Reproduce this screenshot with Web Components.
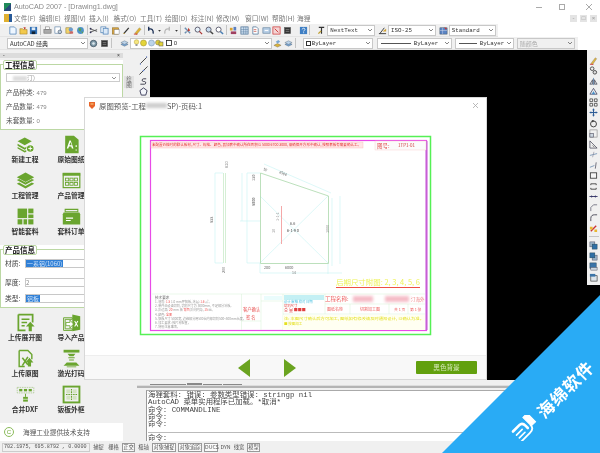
<!DOCTYPE html>
<html lang="zh">
<head>
<meta charset="utf-8">
<title>AutoCAD 2007</title>
<style>
  html, body { margin: 0; padding: 0; background: #fff; overflow: hidden; }
  body { font: 7px "Noto Sans CJK SC", "Liberation Sans", sans-serif; color: #333; }
</style>
</head>
<body>
<cad-window>
  <title-bar></title-bar>
  <menu-bar></menu-bar>
  <tool-row width="498">
    <tool-group icons="new open save"></tool-group><tool-sep></tool-sep>
    <tool-group icons="print preview publish earth"></tool-group><tool-sep></tool-sep>
    <tool-group icons="cut copy paste brush match"></tool-group><tool-sep></tool-sep>
    <tool-group icons="undo drop redo drop"></tool-group><tool-sep></tool-sep>
    <tool-group icons="pan zoom zoomin zoomout"></tool-group><tool-sep></tool-sep>
    <tool-group icons="props grid sheet calc markup dark"></tool-group>
    <tool-group icons="help" style="margin-left:4.500px"></tool-group><tool-sep></tool-sep>
    <tool-group icons="textstyle" style="margin-left:5px"></tool-group>
    <tool-combo w="48" font="mono">NextText</tool-combo>
    <tool-group icons="dimstyle" style="margin-left:2px"></tool-group>
    <tool-combo w="48" font="mono">ISO-25</tool-combo>
    <tool-group icons="tablestyle" style="margin-left:2px"></tool-group>
    <tool-combo w="47" font="mono">Standard</tool-combo>
  </tool-row>
  <tool-row width="578">
    <tool-combo w="81">AutoCAD 经典</tool-combo>
    <tool-group icons="gear dark" style="margin-left:.600px"></tool-group><tool-sep></tool-sep>
    <tool-group icons="layers" style="margin-left:5.600px"></tool-group>
    <tool-combo w="142"><layer-state></layer-state></tool-combo>
    <tool-group icons="layers2 layers" style="margin-left:.600px"></tool-group><tool-sep></tool-sep>
    <tool-combo w="70" font="mono" style="margin-left:6px"><span class="sw"></span>ByLayer</tool-combo>
    <tool-combo w="75" font="mono" line="30" style="margin-left:4px">ByLayer</tool-combo>
    <tool-combo w="59" font="mono" line="18" style="margin-left:3px">ByLayer</tool-combo>
    <tool-combo w="58" disabled style="margin-left:3px">随颜色</tool-combo>
  </tool-row>
  <work-area>
    <side-panel slot="side"></side-panel>
  </work-area>
  <status-bar></status-bar>
  <preview-dialog></preview-dialog>
  <watermark-ribbon></watermark-ribbon>
</cad-window>

<script>
// little 10x10 toolbar glyphs, rough copies of the acad ones
const GLYPHS = {
  new: '<path d="M2 1h5l2 2v6H2z" fill="#eef6ff" stroke="#4a7fb5" stroke-width=".8"/>',
  open: '<path d="M1 3h3l1 1h4v5H1z" fill="#f2c94c" stroke="#a07a20" stroke-width=".6"/><path d="M5 1l3 1-2 2z" fill="#c0392b"/>',
  save: '<rect x="1" y="1" width="8" height="8" fill="#2f6fb5"/><rect x="3" y="1.5" width="4" height="3" fill="#dfeaf5"/><rect x="3" y="6" width="4" height="3" fill="#123"/>',
  print: '<rect x="3" y="1" width="4" height="3" fill="#fff" stroke="#777" stroke-width=".6"/><rect x="1" y="4" width="8" height="4" fill="#aaa" stroke="#666" stroke-width=".6"/>',
  preview: '<rect x="1" y="1" width="6" height="7" fill="#fff" stroke="#5a7fa5" stroke-width=".7"/><circle cx="6.5" cy="6.5" r="2" fill="#bcd" stroke="#456" stroke-width=".7"/>',
  publish: '<rect x="1" y="2" width="6" height="6" fill="#f2d26a" stroke="#8a7a30" stroke-width=".6"/><circle cx="6.5" cy="4" r="2.4" fill="#6a9bd0"/><rect x="5" y="6" width="4" height="2.5" fill="#c66"/>',
  earth: '<circle cx="5" cy="5" r="3.8" fill="#4d93c9"/><path d="M3 2l3 1-1 3-2-1zM6 6l2 .5-1 2z" fill="#5ca04a"/>',
  cut: '<path d="M1 3l8 3M1 7l8-3" stroke="#555" stroke-width="1"/><circle cx="1.8" cy="3" r="1" fill="#335"/><circle cx="1.8" cy="7" r="1" fill="#335"/>',
  copy: '<rect x="1" y="1" width="5.5" height="6.5" fill="#fff" stroke="#4a7fb5" stroke-width=".8"/><rect x="3.5" y="2.5" width="5.5" height="6.5" fill="#dbe9f7" stroke="#4a7fb5" stroke-width=".8"/>',
  paste: '<rect x="1.5" y="2" width="7" height="7" fill="#d9a441" stroke="#8a6a20" stroke-width=".6"/><rect x="3.5" y="4" width="5.5" height="5" fill="#fff" stroke="#777" stroke-width=".5"/>',
  brush: '<path d="M2 8.5L7.5 2" stroke="#333" stroke-width="1.4"/><path d="M1.2 9l1.4-1.6 .8.8z" fill="#e0b030"/>',
  match: '<path d="M2 8l5-6 2 1.5-5 6z" fill="#e0b030" stroke="#996" stroke-width=".5"/><path d="M1 9h4" stroke="#c33" stroke-width="1"/>',
  undo: '<path d="M8 8.5C8.5 4 6 2.5 3 3.5M3 .8v4.6" fill="none" stroke="#1b2f55" stroke-width="1.5"/>',
  redo: '<path d="M2 8.5C1.5 4 4 2.5 7 3.5M7 .8v4.6" fill="none" stroke="#b9b9b9" stroke-width="1.5"/>',
  drop: '<path d="M3.5 4.5h3L5 6.5z" fill="#333"/>',
  pan: '<path d="M2 2l6 6M2 8l2-2" stroke="#6d8fb0" stroke-width="1.6"/><path d="M6 2l2 3-3 1z" fill="#c0392b"/>',
  zoom: '<circle cx="4" cy="4" r="2.8" fill="#e8f2fb" stroke="#556" stroke-width="1"/><path d="M6 6l3 3" stroke="#a33" stroke-width="1.4"/>',
  zoomin: '<circle cx="4" cy="4" r="2.8" fill="#c8dcf0" stroke="#556" stroke-width="1"/><path d="M6 6l3 3" stroke="#444" stroke-width="1.6"/>',
  zoomout: '<circle cx="4" cy="4" r="2.8" fill="#fff" stroke="#556" stroke-width="1"/><path d="M6 6l3 3" stroke="#4a7fb5" stroke-width="1.6"/>',
  props: '<path d="M1 2h3v3H1z" fill="#d8a030"/><path d="M5 1h3v4H5z" fill="#5a7fc0"/><path d="M2 6h6v3H2z" fill="#a04060"/>',
  grid: '<rect x="1" y="1" width="8" height="8" fill="#cfe0f0" stroke="#4a6f95" stroke-width=".8"/><path d="M1 4h8M1 6.5h8M4 1v8M6.5 1v8" stroke="#4a6f95" stroke-width=".5"/>',
  sheet: '<path d="M2 1h4l2 2v6H2z" fill="#fff" stroke="#4a6f95" stroke-width=".8"/><path d="M3 4h3M3 6h3" stroke="#c0392b" stroke-width=".7"/>',
  calc: '<rect x="1" y="2" width="8" height="6" fill="#b8cfe6" stroke="#5a7a99" stroke-width=".7"/><path d="M3 5h4" stroke="#fff"/>',
  markup: '<rect x="1" y="1" width="8" height="8" fill="#f4d4d4" stroke="#c33" stroke-width=".8"/><path d="M3 3l4 4" stroke="#c33"/>',
  dark: '<rect x="1.5" y="1.5" width="7" height="7" fill="#333" stroke="#666" stroke-width=".6"/><path d="M3 4h4M3 6h4" stroke="#aaa" stroke-width=".6"/>',
  help: '<rect x="1" y="1" width="8" height="8" fill="#3f7fc4"/><path d="M3.6 3.8c0-1.8 3-1.8 3 0 0 1.2-1.5 1-1.5 2.3M5.1 7v1" fill="none" stroke="#fff" stroke-width=".9"/>',
  textstyle: '<path d="M2 1.5h6M5 1.5v7" stroke="#333" stroke-width="1.3"/><path d="M1 8l3-3 1 1-3 3z" fill="#c0a030"/>',
  dimstyle: '<path d="M1 8.5h8M2 8.5L7 2" stroke="#333" stroke-width="1"/><path d="M5 6l4-3v3z" fill="#d0a030"/>',
  tablestyle: '<rect x="1" y="2" width="8" height="7" fill="#5a84c4" stroke="#345" stroke-width=".5"/><path d="M1 5h8M4 2v7" stroke="#dde" stroke-width=".5"/><path d="M6 1l3 2-2 1z" fill="#c33"/>',
  gear: '<circle cx="5" cy="5" r="3.6" fill="#7f9aa8" stroke="#345" stroke-width=".8"/><circle cx="5" cy="5" r="1.4" fill="#dfe8ee"/>',
  layers: '<path d="M1 6l4-2 4 2-4 2z" fill="#7aa7d4" stroke="#456" stroke-width=".4"/><path d="M1 4l4-2 4 2-4 2z" fill="#bcd4ea" stroke="#456" stroke-width=".4"/>',
  layers2: '<path d="M1 7l4-2 4 2-4 2z" fill="#d8b23a" stroke="#654" stroke-width=".4"/><path d="M3 3l3-2 2 2-3 2z" fill="#7aa7d4"/>',
  line: '<path d="M1.5 8.5l7-7" stroke="#222" stroke-width=".9"/><path d="M1 9h1M8 1h1" stroke="#57c" stroke-width="1.2"/>',
  xline: '<path d="M.5 9.5l9-9" stroke="#222" stroke-width=".9"/><circle cx="5" cy="5" r=".9" fill="#57c"/>',
  pline: '<path d="M8 2H5c-2 0-2 3 0 3h1c2 0 2 3 0 3H1.5" fill="none" stroke="#223" stroke-width=".9"/>',
  polygon: '<path d="M5 1l4 3-1.5 5h-5L1 4z" fill="#f4f6fb" stroke="#224" stroke-width=".9"/>',
  erase: '<path d="M2 8.5L7 2l1.5 1L4 9.500z" fill="#e2b93f" stroke="#765" stroke-width=".4"/><path d="M1 9.300h4" stroke="#c33" stroke-width=".9"/>',
  copyobj: '<circle cx="3.500" cy="3" r="2" fill="none" stroke="#222" stroke-width=".8"/><circle cx="6.500" cy="7" r="2" fill="#ddd" stroke="#222" stroke-width=".8"/>',
  mirror: '<path d="M5 1v8" stroke="#369" stroke-width=".7"/><path d="M4 3v5H1zM6 3v5h3z" fill="#d0d6dd" stroke="#334" stroke-width=".7"/>',
  offset: '<path d="M5 1.500L9 8H1z" fill="none" stroke="#335" stroke-width=".8"/><path d="M5 4.500L7 8H3z" fill="#4a90c8"/>',
  array: '<path d="M1 1h3v3H1zM6 1h3v3H6zM1 6h3v3H1zM6 6h3v3H6z" fill="#f4f4f4" stroke="#333" stroke-width=".8"/>',
  move: '<path d="M5 .8v8.400M.8 5h8.400" stroke="#2c5c96" stroke-width="1.200"/><path d="M5 .5l1.500 2h-3zM5 9.500l1.500-2h-3zM.5 5l2-1.500v3zM9.500 5l-2-1.500v3z" fill="#2c5c96"/>',
  rotate: '<circle cx="5" cy="5.500" r="3.300" fill="#eee" stroke="#333" stroke-width="1"/><path d="M3 1l3 1-2 2z" fill="#333"/>',
  scale: '<rect x="1" y="1" width="8" height="8" fill="none" stroke="#888" stroke-width=".7"/><rect x="1" y="5" width="4" height="4" fill="#cdd6df" stroke="#556" stroke-width=".7"/>',
  stretch: '<path d="M1 9V1l8 8z" fill="#eee" stroke="#445" stroke-width=".8"/><path d="M4 6l2 2" stroke="#777"/>',
  trim: '<path d="M1 6l8-2" stroke="#6a8cb0" stroke-width=".9"/><path d="M5.500 2L4 8" stroke="#889" stroke-width=".7"/>',
  extend: '<path d="M1 7l5-2" stroke="#6a8cb0" stroke-width=".9"/><path d="M8 1.500L7 8.500" stroke="#445" stroke-width=".8"/>',
  brk: '<rect x="1.500" y="2" width="7" height="6" fill="#f6f6f6" stroke="#333" stroke-width=".9"/>',
  brk2: '<path d="M2 3.500V2h6v1.500M2 6.500V8h6V6.500" fill="none" stroke="#333" stroke-width=".9"/>',
  join: '<path d="M.5 5h9" stroke="#336" stroke-width="1"/><path d="M4.500 5l-2-1.500v3zM5.500 5l2-1.500v3z" fill="#336"/>',
  chamfer: '<path d="M2 9V5l3-3h4" fill="none" stroke="#667" stroke-width=".9"/>',
  fillet: '<path d="M2 9V6c0-3 2-4 4-4h3" fill="none" stroke="#334" stroke-width=".9"/>',
  explode: '<path d="M2 8l6-6" stroke="#c33" stroke-width="1.500"/><path d="M1 3h3v3H1zM6 6h3v3H6z" fill="#e8b730"/>',
  front: '<rect x="1" y="1" width="5.500" height="5.500" fill="#9cb4c9" stroke="#445" stroke-width=".5"/><rect x="3.500" y="3.500" width="5.500" height="5.500" fill="#2f6fa5" stroke="#245" stroke-width=".5"/>',
  back: '<rect x="3.500" y="3.500" width="5.500" height="5.500" fill="#9cb4c9" stroke="#445" stroke-width=".5"/><rect x="1" y="1" width="5.500" height="5.500" fill="#2f6fa5" stroke="#245" stroke-width=".5"/>',
  above: '<rect x="1" y="1" width="7" height="6" fill="#3b74a8" stroke="#245" stroke-width=".5"/><rect x="2" y="6" width="7" height="3" fill="#cfd8e0" stroke="#445" stroke-width=".5"/>',
  below: '<rect x="2" y="3" width="7" height="6" fill="#dde4ea" stroke="#333" stroke-width=".7"/><rect x="1" y="1" width="6" height="3" fill="#3b74a8"/>'
};

// green buttons of the left panel, 24x24
const ACTIONS = {
  newp: '<path d="M2 8l9-5 9 5-9 5z"/><path d="M2 11l9 5 3-1.600v2.400L11 18.500 2 13.500z"/><path d="M2 15l9 5 2-1v2l-2 1-9-5z"/><circle cx="18" cy="17" r="5" fill="#fff"/><circle cx="18" cy="17" r="4.200"/><path d="M18 14.500v5M15.500 17h5" stroke="#fff" stroke-width="1.200"/>',
  orig: '<path d="M4 1h11l6 5v17H4z"/><path d="M6 17l3.500-10h1.500l3.500 10h-2l-.8-2.500H8.800L8 17zM9.300 12.800h2.900l-1.400-4z" fill="#fff"/><path d="M17 14h2M18 13v2M17 19h2" stroke="#fff"/>',
  proj: '<path d="M12 2l11 6-11 6L1 8z"/><path d="M1 11.500l3-1.500 8 4.400 8-4.400 3 1.500-11 6z"/><path d="M1 16l3-1.500 8 4.400 8-4.400 3 1.500-11 6z"/>',
  prod: '<rect x="1.500" y="3" width="21" height="18" fill="none" stroke="#6aa52f" stroke-width="1.500"/><rect x="1" y="3" width="22" height="3"/><g fill="none" stroke="#6aa52f" stroke-width="1.100"><rect x="4.500" y="9" width="4" height="3.500"/><rect x="10" y="9" width="4" height="3.500"/><rect x="15.500" y="9" width="4" height="3.500"/><rect x="4.500" y="14.500" width="4" height="3.500"/><rect x="10" y="14.500" width="4" height="3.500"/><rect x="15.500" y="14.500" width="4" height="3.500"/></g>',
  nest: '<rect x="2" y="2" width="12" height="12"/><rect x="15.500" y="2" width="6.500" height="6"/><rect x="15.500" y="9.500" width="6.500" height="4.500"/><rect x="2" y="15.500" width="6" height="6.500"/><rect x="9.500" y="15.500" width="4.500" height="6.500"/><rect x="15.500" y="15.500" width="6.500" height="6.500"/>',
  order: '<path d="M4 3h16v3H4z" fill="none" stroke="#6aa52f" stroke-width="1.300"/><path d="M2 7h20l1 2v13H1V9z"/><path d="M5 14h9M5 17h6" stroke="#fff" stroke-width="1.400"/>',
  upexp: '<path d="M3 2h18v10M3 2v20h9" fill="none" stroke="#6aa52f" stroke-width="2.200"/><path d="M7 8h10M7 12h7M7 16h4" stroke="#6aa52f" stroke-width="1.800"/><path d="M18 11l5.500 6H20v6h-4v-6h-3.500z"/>',
  imp: '<path d="M2 6v16h11V20H4V8h9V6z" fill="none" stroke="#6aa52f" stroke-width="1.200"/><path d="M13 2l10 2v17l-10 2z"/><path d="M5 12h5V9l4.500 5-4.500 5v-3H5z" fill="#fff" stroke="#6aa52f" stroke-width="1"/><path d="M16 10l4 7M20 10l-4 7" stroke="#fff" stroke-width="1.300"/>',
  upori: '<path d="M4 2h11l5 5v6M4 2v20h7" fill="none" stroke="#6aa52f" stroke-width="1.800"/><path d="M8 11l7 9M15 10l-7 11" stroke="#6aa52f" stroke-width="2"/><path d="M17 11l5 6h-3v5h-4v-5h-3z"/>',
  laser: '<rect x="2" y="1" width="20" height="3.500"/><path d="M7 6h10l-2.500 3h-5z"/><path d="M8 11h8M9 14h6" stroke="#6aa52f" stroke-width="1.300"/><path d="M2 21l4-4h12l4 4z"/><path d="M6 22.500h12" stroke="#6aa52f" stroke-width="1"/>',
  merge: '<rect x="1.500" y="3" width="21" height="7" fill="none" stroke="#9cc07a" stroke-width=".8" stroke-dasharray="2 1"/><rect x="4" y="5" width="4" height="3"/><rect x="10" y="5" width="4" height="3"/><rect x="16" y="5" width="4" height="3"/><path d="M12 11v4" stroke="#6aa52f" stroke-width="1.200"/><rect x="9" y="15" width="6" height="6"/><path d="M9 18h6" stroke="#fff" stroke-width=".8"/>',
  frame: '<rect x="2" y="2" width="20" height="20" fill="none" stroke="#6aa52f" stroke-width="2.400"/><rect x="5.500" y="5.500" width="5" height="5" fill="#d3e3c0"/><rect x="13.500" y="5.500" width="5" height="5" fill="#d3e3c0"/><rect x="5.500" y="13.500" width="5" height="5" fill="#d3e3c0"/><rect x="13.500" y="13.500" width="5" height="5" fill="#d3e3c0"/><path d="M12 5v14M5 12h14" stroke="#6aa52f" stroke-width="1.400" stroke-dasharray="2 1"/>'
};

const glyph = (name) => `<svg viewBox="0 0 10 10" width="9" height="9">${GLYPHS[name] || ""}</svg>`;

class CadWindow extends HTMLElement {
  connectedCallback() {
    this.attachShadow({ mode: "open" }).innerHTML = `
      <style>
        :host { display: flex; flex-direction: column; position: relative; width: 600px; height: 453px; overflow: hidden; background: #fff; filter: blur(.35px); }
      </style>
      <slot></slot>`;
  }
}

class TitleBar extends HTMLElement {
  connectedCallback() {
    this.attachShadow({ mode: "open" }).innerHTML = `
      <style>
        :host { display: flex; align-items: center; height: 12px; flex: none; padding: 1px 0 0 4px; color: #8a8a8a; font-size: 7.2px; font-family: "Liberation Sans", "Noto Sans CJK SC", sans-serif; box-sizing: border-box; }
        .logo { width: 7px; height: 8px; margin-right: 3px; background: linear-gradient(135deg, #1f8a5a 0 50%, #284a7a 50%); }
        .ctl { margin-left: auto; display: flex; align-items: center; padding-right: 7px; gap: 15px; }
        svg { display: block; }
      </style>
      <span class="logo"></span>AutoCAD 2007 - [Drawing1.dwg]
      <div class="ctl">
        <svg width="8" height="8"><path d="M1 4.500h6" stroke="#aaa"/></svg>
        <svg width="8" height="8" style="margin-right:4px"><rect x="1.500" y="1.500" width="5" height="5" fill="none" stroke="#aaa"/></svg>
        <svg width="8" height="8"><path d="M1 1l6 6M7 1L1 7" stroke="#aaa"/></svg>
      </div>`;
  }
}

class MenuBar extends HTMLElement {
  connectedCallback() {
    const items = ["文件(F)", "编辑(E)", "视图(V)", "插入(I)", "格式(O)", "工具(T)", "绘图(D)", "标注(N)", "修改(M)", "窗口(W)", "帮助(H)", "海狸"];
    const widths = [25, 25, 25, 24.500, 26.500, 25, 26, 25, 29, 27, 25, 20];
    this.attachShadow({ mode: "open" }).innerHTML = `
      <style>
        :host { display: flex; align-items: center; height: 12px; flex: none; color: #777; font-size: 6.700px; white-space: nowrap; }
        .doc { width: 8px; height: 8px; margin: 0 2px 0 4px; background: linear-gradient(90deg, #e0b030 0 60%, #285a9a 60%); }
        span.m { display: block; }
        .win { margin-left: auto; display: flex; gap: 3px; padding-right: 3px; }
        .win i { width: 7px; height: 7px; background: #e4e4e4; color: #999; font: 6px/7px "Liberation Sans", sans-serif; text-align: center; display: block; }
      </style>
      <span class="doc"></span>
      ${items.map((t, i) => `<span class="m" style="width:${widths[i]}px">${t}</span>`).join("")}
      <div class="win"><i>-</i><i>&#9633;</i><i>×</i></div>`;
  }
}

class ToolRow extends HTMLElement {
  connectedCallback() {
    const w = this.getAttribute("width");
    this.attachShadow({ mode: "open" }).innerHTML = `
      <style>
        :host { display: block; height: 13px; flex: none; }
        .bar { display: flex; align-items: center; height: 13px; width: ${w}px; background: #f0f0f0; box-sizing: border-box; padding-left: 7px; border-bottom: 1px solid #e4e4e4; }
      </style>
      <div class="bar"><slot></slot></div>`;
  }
}

class ToolGroup extends HTMLElement {
  connectedCallback() {
    const names = this.getAttribute("icons").split(" ");
    this.attachShadow({ mode: "open" }).innerHTML = `
      <style>
        :host { display: flex; align-items: center; flex: none; }
        span { width: 10.800px; height: 11px; display: flex; align-items: center; justify-content: center; }
        span.drop { width: 6px; }
        span.drop svg { flex: none; }
      </style>
      ${names.map((n) => `<span class="${n}">${glyph(n)}</span>`).join("")}`;
  }
}

class ToolSep extends HTMLElement {
  connectedCallback() {
    this.attachShadow({ mode: "open" }).innerHTML = `
      <style>:host { display: block; flex: none; width: 1px; height: 10px; margin: 0 1px; background: #c4c4c4; }</style>`;
  }
}

class ToolCombo extends HTMLElement {
  connectedCallback() {
    const w = this.getAttribute("w");
    const mono = this.getAttribute("font") === "mono";
    const off = this.hasAttribute("disabled");
    const line = this.getAttribute("line");
    this.attachShadow({ mode: "open" }).innerHTML = `
      <style>
        :host { display: flex; flex: none; align-items: center; box-sizing: border-box; width: ${w}px; height: 11px; background: ${off ? "#f0f0f0" : "#fff"}; border: 1px solid #c8c8c8; padding: 0 1px 0 2px; font-size: 6px; color: ${off ? "#aaa" : "#333"}; white-space: nowrap; overflow: hidden; ${mono ? 'font-family: "Liberation Mono", monospace; font-size: 5.800px;' : ""} }
        .txt { flex: 1; display: flex; align-items: center; overflow: hidden; min-width: 0; }
        .ln { width: ${line}px; height: 1px; background: #555; margin: 0 3px 0 1px; flex: none; }
        svg { flex: none; }
        ::slotted(.sw) { width: 5px; height: 5px; border: 1px solid #333; box-sizing: border-box; margin-right: 1px; }
      </style>
      <div class="txt">${line ? '<span class="ln"></span>' : ""}<slot></slot></div>
      <svg width="6" height="6"><path d="M1 2l2 2 2-2" fill="none" stroke="#666" stroke-width=".8"/></svg>`;
  }
}

class LayerState extends HTMLElement {
  connectedCallback() {
    this.attachShadow({ mode: "open" }).innerHTML = `
      <style>:host { display: flex; align-items: center; gap: .500px; font: 6px "Liberation Sans", sans-serif; } svg { display: block; }</style>
      <svg width="7" height="8"><circle cx="3.500" cy="3" r="2.300" fill="#f5e680" stroke="#b8a030" stroke-width=".5"/><rect x="2.500" y="5" width="2" height="2" fill="#999"/></svg>
      <svg width="7" height="8"><circle cx="3.500" cy="4" r="3" fill="#e3d43a" stroke="#98882a" stroke-width=".5"/></svg>
      <svg width="7" height="8"><circle cx="3.500" cy="4" r="3" fill="#bcd4ea" stroke="#6a8cb0" stroke-width=".5"/></svg>
      <svg width="10" height="8"><circle cx="3" cy="3.500" r="2.500" fill="#d9c83a" stroke="#777" stroke-width=".5"/><rect x="4" y="3" width="4" height="4" fill="#e3d43a" stroke="#555" stroke-width=".5"/></svg>
      <svg width="6" height="8"><rect x=".500" y="1.500" width="5" height="5" fill="#fff" stroke="#222" stroke-width=".8"/></svg>
      <span>&nbsp;0</span>`;
  }
}

class SideGroup extends HTMLElement {
  connectedCallback() {
    const h = this.getAttribute("h");
    this.attachShadow({ mode: "open" }).innerHTML = `
      <style>
        :host { display: block; flex: none; height: ${h}px; background: #fff; position: relative; box-sizing: border-box; padding-top: 4px; }
        .box { height: 100%; box-sizing: border-box; border: 1px solid #bcd8a4; border-bottom-color: #bcd8a4; border-left-width: 1px; }
        .cap { position: absolute; top: 0; left: 3px; padding: 0 1px; background: #fff; border: 1px solid #bcd8a4; border-radius: 2px; font-size: 7.500px; line-height: 7.500px; font-weight: 700; color: #222; }
      </style>
      <div class="cap">${this.getAttribute("label")}</div>
      <div class="box"><slot></slot></div>`;
  }
}

class ActionGrid extends HTMLElement {
  connectedCallback() {
    this.attachShadow({ mode: "open" }).innerHTML = `
      <style>
        :host { display: grid; flex: none; height: 115px; box-sizing: border-box; grid-template-columns: 46px 46px; grid-auto-rows: 36px; padding: 5px 0 0 2px; background: #f0f0f0; }
      </style>
      <slot></slot>`;
  }
}

class ActionButton extends HTMLElement {
  connectedCallback() {
    const art = ACTIONS[this.getAttribute("icon")];
    this.attachShadow({ mode: "open" }).innerHTML = `
      <style>
        :host { display: flex; flex-direction: column; align-items: center; font-size: 6.800px; font-weight: 700; color: #333; white-space: nowrap; line-height: 9px; }
        svg { display: block; margin-bottom: 1px; fill: #6aa52f; }
      </style>
      <svg viewBox="0 0 24 24" width="19" height="19">${art}</svg>
      <slot></slot>`;
  }
}

class FormField extends HTMLElement {
  connectedCallback() {
    const sel = this.hasAttribute("selected");
    this.attachShadow({ mode: "open" }).innerHTML = `
      <style>
        :host { display: flex; align-items: center; height: 8px; font-size: 7px; color: #444; white-space: nowrap; }
        .l { width: 21px; padding-left: 4px; box-sizing: border-box; font-size: 6.800px; }
        .i { margin-left: 3px; flex: 1; margin-right: 3px; height: 9px; border: 1px solid #c8c8c8; box-sizing: border-box; font-size: 6px; line-height: 7px; color: #888; overflow: hidden; }
        .i span { ${sel ? "background: #2f7fd6; color: #cfe4fb; padding: 0 1px;" : ""} display: inline-block; }
      </style>
      <span class="l">${this.getAttribute("label")}:</span>
      <div class="i"><span><slot></slot></span></div>`;
  }
}

class SidePanel extends HTMLElement {
  connectedCallback() {
    this.attachShadow({ mode: "open" }).innerHTML = `
      <style>
        :host { display: flex; flex-direction: column; width: 123px; flex: none; background: #f0f0f0; overflow: hidden; }
        .head { height: 10px; flex: none; box-sizing: border-box; padding-top: 3px; }
        .head div { height: 5px; background: #dcdcdc; display: flex; justify-content: space-between; padding: 0 3px; font: 5px/5px "Liberation Sans", sans-serif; color: #333; }
        .stat { font-size: 6.700px; color: #555; height: 14px; line-height: 14px; padding-left: 5px; white-space: nowrap; }
        .stat b { font-weight: 400; color: #888; font-size: 6px; margin-left: 2px; font-family: "Liberation Sans", sans-serif; }
        .sel { margin: 8px 2px 0 5px; height: 9px; border: 1px solid #ccc; box-sizing: border-box; display: flex; align-items: center; justify-content: space-between; padding: 0 2px 0 6px; font-size: 6px; color: #999; }
        .sel i { display: inline-block; width: 14px; height: 5px; background: #ddd; filter: blur(1px); vertical-align: middle; }
        .rows { display: flex; flex-direction: column; gap: 8px; padding-top: 9px; }
        .foot { flex: 1; background: #fff; display: flex; align-items: center; font-size: 6.700px; color: #555; gap: 9px; padding-left: 4px; white-space: nowrap; }
        .c { width: 8px; height: 8px; border: 1px solid #8cbc5c; border-radius: 50%; color: #6aa52f; font: 6px/8px "Liberation Sans", sans-serif; text-align: center; flex: none; }
      </style>
      <div class="head"><div><span>-</span><span>×</span></div></div>
      <side-group label="工程信息" h="70">
        <div class="sel"><span><i></i>汀)</span><svg width="6" height="6"><path d="M1 2l2 2 2-2" fill="none" stroke="#777" stroke-width=".8"/></svg></div>
        <div style="height:3px"></div>
        <div class="stat">产品种类:<b>479</b></div>
        <div class="stat">产品数量:<b>479</b></div>
        <div class="stat">未套数量:<b>0</b></div>
      </side-group>
      <action-grid>
        <action-button icon="newp">新建工程</action-button>
        <action-button icon="orig">原始图纸</action-button>
        <action-button icon="proj">工程管理</action-button>
        <action-button icon="prod">产品管理</action-button>
        <action-button icon="nest">智能套料</action-button>
        <action-button icon="order">套料订单</action-button>
      </action-grid>
      <side-group label="产品信息" h="63">
        <div class="rows">
          <form-field label="材质" selected>一系铝(1060)</form-field>
          <form-field label="厚度" style="margin-top:3px">2</form-field>
          <form-field label="类型" selected>铝板</form-field>
        </div>
      </side-group>
      <action-grid>
        <action-button icon="upexp">上传展开图</action-button>
        <action-button icon="imp">导入产品</action-button>
        <action-button icon="upori">上传原图</action-button>
        <action-button icon="laser">激光打码</action-button>
        <action-button icon="merge">合并DXF</action-button>
        <action-button icon="frame">钣板外框</action-button>
      </action-grid>
      <div class="foot"><span class="c">C</span>海狸工业提供技术支持</div>`;
  }
}

class VStrip extends HTMLElement {
  connectedCallback() {
    const names = this.getAttribute("icons").split(" ");
    this.attachShadow({ mode: "open" }).innerHTML = `
      <style>
        :host { display: flex; flex-direction: column; align-items: center; flex: none; width: 13px; background: #f0f0f0; box-sizing: border-box; padding-top: 5px; }
        span { height: 10.500px; width: 10px; display: flex; align-items: center; justify-content: center; flex: none; }
        i { display: block; width: 10px; height: 1px; background: #c4c4c4; margin: 2px 0 4px; flex: none; }
      </style>
      ${names.map((n) => n === "|" ? "<i></i>" : `<span>${glyph(n)}</span>`).join("")}`;
  }
}

class CommandLine extends HTMLElement {
  connectedCallback() {
    this.attachShadow({ mode: "open" }).innerHTML = `
      <style>
        :host { display: flex; flex-direction: column; flex: none; height: 61px; background: #f0f0f0; box-sizing: border-box; }
        .tabs { height: 5px; flex: none; display: flex; gap: 1px; padding-left: 27px; align-items: flex-end; }
        .tabs i { display: block; height: 1px; background: #888; }
        .rule { height: 3px; flex: none; margin-left: 14px; background: #b4b4b4; border-top: 1px solid #ddd; box-sizing: border-box; }
        .wrap { flex: 1; display: flex; padding: 2px 0 0 23px; min-height: 0; }
        .box { flex: 1; display: flex; flex-direction: column; background: #fff; border-left: 1px solid #999; border-top: 1px solid #aaa; font: 7.400px/7.350px "Liberation Mono", "Noto Sans CJK SC", monospace; color: #444; white-space: pre; overflow: hidden; padding: 1px 0 0 1px; }
        .hist { height: 41px; flex: none; border-bottom: 1px solid #bbb; box-sizing: border-box; }
        .now { padding-top: 2px; }
      </style>
      <div class="tabs"><i style="width:36px"></i><i style="width:15px;height:2px"></i><i style="width:19px"></i><i style="width:19px"></i></div>
      <div class="rule"></div>
      <div class="wrap"><div class="box">
        <div class="hist">海狸套料: 错误: 参数类型错误: stringp nil
AutoCAD 菜单实用程序已加载。*取消*
命令: COMMANDLINE
命令:
命令:</div>
        <div class="now">命令:</div>
      </div></div>`;
  }
}

class WorkArea extends HTMLElement {
  connectedCallback() {
    this.attachShadow({ mode: "open" }).innerHTML = `
      <style>
        :host { display: flex; flex: 1; min-height: 0; }
        .col { flex: 1; display: flex; flex-direction: column; min-width: 0; }
        .main { flex: 1; display: flex; min-height: 0; }
        .rail { width: 14px; flex: none; background: #f0f0f0; box-sizing: border-box; padding: 26px 0 0 1px; }
        .rail span { display: block; width: 10px; height: 12px; font-size: 5.500px; line-height: 6px; color: #666; text-align: center; background: #e2e2e2; }
        .canvas { flex: 1; background: #000; display: flex; justify-content: flex-end; align-items: flex-start; }
      </style>
      <slot name="side"></slot>
      <div class="col">
        <div class="main">
          <div class="rail"><span>绘图</span></div>
          <v-strip icons="line xline pline polygon"></v-strip>
          <div class="canvas">
            <v-strip style="height:235px" icons="erase copyobj mirror offset array move rotate scale stretch trim extend brk brk2 join chamfer fillet explode | front back above below"></v-strip>
          </div>
        </div>
        <command-line></command-line>
      </div>`;
  }
}

class StatusBar extends HTMLElement {
  connectedCallback() {
    const keys = [["捕捉", 13, 0], ["栅格", 13, 0], ["正交", 13, 1], ["极轴", 13, 0], ["对象捕捉", 24, 1], ["对象追踪", 24, 1], ["DUCS", 14, 1], ["DYN", 11, 0], ["线宽", 12, 0], ["模型", 13, 1]];
    this.attachShadow({ mode: "open" }).innerHTML = `
      <style>
        :host { display: flex; align-items: center; gap: 2px; height: 12px; flex: none; background: #f0f0f0; padding-left: 2px; font-size: 5.300px; color: #555; white-space: nowrap; box-sizing: border-box; }
        .xy { width: 88px; height: 9px; border: 1px solid #ccc; box-sizing: border-box; font: 5.100px/7px "Liberation Mono", monospace; color: #555; padding-left: 1px; overflow: hidden; flex: none; }
        .k { text-align: center; height: 9px; line-height: 9px; box-sizing: border-box; flex: none; }
        .on { background: #fafafa; border: 1px solid #999; line-height: 7px; }
      </style>
      <div class="xy">702.1975, 695.8792 , 0.0000</div>
      ${keys.map(([t, w, on]) => `<span class="k${on ? " on" : ""}" style="width:${w}px">${t}</span>`).join("")}`;
  }
}

class SheetDrawing extends HTMLElement {
  connectedCallback() {
    this.attachShadow({ mode: "open" }).innerHTML = `
      <style>
        :host { display: block; }
        svg { display: block; }
        text { font-family: "Noto Sans CJK SC", "Liberation Sans", sans-serif; }
      </style>
      <svg width="293" height="201" viewBox="139 134 293 201">
        <rect x="140.500" y="135.500" width="290" height="198" fill="#fff" stroke="#55f055" stroke-width="1.500"/>
        <rect x="150.500" y="139.500" width="276" height="190" fill="none" stroke="#e84ae8" stroke-width="1.200"/>
        <path d="M426.500 140v189" stroke="#c65fd6" stroke-width="2"/>

        <rect x="151" y="141" width="212" height="6" fill="#ffe6e6" stroke="#f8b8b8" stroke-width=".4"/>
        <text x="152" y="145.400" font-size="3.200" fill="#e23030" textLength="209" lengthAdjust="spacingAndGlyphs">未配置价格时的默认板材, 尺寸、规格、颜色, 其加套中确认所在面积以 5000 6700 3000, 来确保开方形中确认, 按照套板有需要确认工。</text>
        <rect x="375" y="140" width="51" height="9" fill="#fbfbfb" stroke="#f8c8c8" stroke-width=".4"/>
        <text x="377" y="146.500" font-size="5.500" fill="#e05050">图号:</text>
        <text x="398" y="146" font-size="4.500" fill="#d04040">1TP1-01</text>

        <g fill="none" stroke="#c6f4f4" stroke-width=".6">
          <path d="M215 172v90M215 172h8M215 262h8M247 172v90M247 262h13M247 172h13"/>
          <path d="M264 163l67 29M332 197v68M260 272h82M340 195v68M328 263v10M260 262v10"/>
          <path d="M260 262l68-67M260 195l68 67"/>
          <path d="M242 172v48M240 220h20"/>
        </g>
        <path d="M223.500 172v90M225.500 172v90" stroke="#b8e4b8" stroke-width=".6"/>
        <path d="M260.500 172v90.500h68v-67.500L260.500 172z" fill="none" stroke="#abd8ab" stroke-width=".8"/>
        <path d="M281.500 205v38" stroke="#f4a8a8" stroke-width="1"/>
        <text x="228" y="167" font-size="4" fill="#777" transform="rotate(-90 228 167)">620</text>
        <text x="213" y="222" font-size="3.800" fill="#666" transform="rotate(-90 213 222)">638</text>
        <text x="255" y="180" font-size="3.800" fill="#666" transform="rotate(-90 255 180)">130</text>
        <text x="255" y="205" font-size="3.800" fill="#555" transform="rotate(-90 255 205)">6000</text>
        <text x="263" y="169" font-size="3.600" fill="#666" transform="rotate(25 263 169)">50</text>
        <text x="279" y="172" font-size="3.600" fill="#555" transform="rotate(25 279 172)">6500</text>
        <text x="279" y="220" font-size="3.800" fill="#888" transform="rotate(-90 279 220)">1-1-1</text>
        <text x="290" y="224" font-size="3.800" fill="#555">6.6</text>
        <text x="287" y="231" font-size="3.800" fill="#444">6-1-9 0</text>
        <text x="264" y="268" font-size="3.800" fill="#666">200</text>
        <text x="285" y="268" font-size="3.800" fill="#666">6000</text>
        <text x="292" y="273" font-size="3.500" fill="#777">14</text>
        <text x="329" y="232" font-size="3.600" fill="#777" transform="rotate(-90 329 232)">1000</text>
        <text x="335" y="172" font-size="3.600" fill="#777" transform="rotate(-90 335 232)">10</text>
        <text x="225" y="272" font-size="3.600" fill="#555" transform="rotate(-90 225 272)">200</text>

        <text x="336" y="284" font-size="7.200" fill="#eef25a" textLength="84" lengthAdjust="spacingAndGlyphs">后期尺寸附图: 2, 3, 4, 5, 6</text>
        <path d="M336 286.500h84" stroke="#ee5044" stroke-width="1"/>

        <g fill="none" stroke="#d6f0d6" stroke-width=".5">
          <path d="M152 293h273M241.500 293v36M261 293v36M283 293v36M325 293v20M283 313h142M261 300h22M241 320h20M325 303h100M350 303v10M389 303v10M408 303v10"/>
        </g>
        <text x="155" y="297.500" font-size="3.600" fill="#666">技术要求</text>
        <g font-size="3.100" fill="#999">
          <text x="155" y="302">1. 材质: <tspan fill="#ee5050">1.5</tspan> 1.0 mm厚铝板, 涂层: <tspan fill="#ee5050">1.6</tspan> ㎡。</text>
          <text x="155" y="306.200">2. 单件由设备切割, 切割尺寸为 5000mm, 不足部分补板。</text>
          <text x="155" y="310.400">3. 折边高: <tspan fill="#ee5050">20</tspan> mm 板 <tspan fill="#ee5050">背面</tspan> 折向内角, <tspan fill="#ee5050">15</tspan> ㎜。</text>
          <text x="155" y="314.600">4. 颜色: <tspan fill="#ee5050">全黑</tspan></text>
          <text x="155" y="318.800">5. 铝板尺寸 5000宽, 边缘部分用500长内部切割500~500mm长度。</text>
          <text x="155" y="323">6. 加工要求: 按片材检查。</text>
          <text x="155" y="327.200">7. 特别注意事项。</text>
        </g>
        <text x="243" y="310" font-size="4.300" fill="#e85050">客户确认</text>
        <text x="246" y="317.500" font-size="4.300" fill="#e85050">签 名</text>
        <rect x="264" y="295" width="18" height="4" fill="#eafcfc"/>
        <rect x="284" y="294" width="40" height="5" fill="#c4f0f4"/>
        <text x="284" y="302" font-size="3.300" fill="#45bfe0">设计 审核 校对 日期</text>
        <text x="284" y="306" font-size="3.300" fill="#e04040">切割尺寸</text>
        <text x="284" y="311" font-size="4" fill="#e04040">总 量 <tspan font-weight="700">■■■</tspan></text>
        <text x="325" y="300" font-size="5.500" fill="#ee6060">工程名称:</text>
        <g fill="#f5bcc6" style="filter:blur(1.500px)">
          <rect x="353" y="295" width="20" height="6"/>
          <rect x="385" y="295" width="24" height="6"/>
        </g>
        <text x="411" y="300" font-size="4.500" fill="#ee8080">汀海外</text>
        <text x="327" y="309.500" font-size="4" fill="#ee6060">图纸名称</text>
        <text x="360" y="309.500" font-size="4" fill="#ee6060">切割加工图</text>
        <text x="394" y="309.500" font-size="3.800" fill="#ee6060">共 1 页</text>
        <text x="410" y="309.500" font-size="3.800" fill="#ee6060">第 1 张</text>
        <rect x="283" y="314" width="142" height="15" fill="#fffff2"/>
        <text x="284" y="319" font-size="3.500" fill="#e4e020" textLength="140" lengthAdjust="spacingAndGlyphs">注: 本图尺寸确认后方可加工, 图纸如有修改请及时通知设计, 以确认为准。</text>
        <text x="284" y="324" font-size="3.500" fill="#e4e020">■ 按图加工</text>
      </svg>`;
  }
}

class PreviewDialog extends HTMLElement {
  connectedCallback() {
    this.attachShadow({ mode: "open" }).innerHTML = `
      <style>
        :host { position: absolute; left: 84px; top: 97px; width: 403px; height: 283px; background: #fff; box-sizing: border-box; border: 1px solid #d8d8d8; display: flex; flex-direction: column; }
        .head { height: 15px; flex: none; display: flex; align-items: center; padding: 0 7px 0 4px; font-size: 7.400px; color: #555; white-space: nowrap; }
        .head svg.s { margin-right: 4px; }
        .head i { display: inline-block; width: 21px; height: 5px; background: #ccc; filter: blur(1.500px); }
        .head .x { margin-left: auto; }
        .body { flex: 1; padding: 22px 0 0 54px; min-height: 0; }
        .foot { height: 24px; flex: none; background: #f8f8f8; border-top: 1px solid #eee; display: flex; align-items: center; padding: 0 9px 0 153px; box-sizing: border-box; }
        .foot svg { display: block; }
        .next { margin-left: 34px; }
        button { margin-left: auto; margin-top: -1px; width: 61px; height: 13px; border: 0; border-radius: 1px; padding: 0; background: #62a00e; color: #d5e8b8; font: 6.600px "Noto Sans CJK SC", sans-serif; }
      </style>
      <div class="head">
        <svg class="s" width="6" height="7" viewBox="0 0 6 7"><path d="M0 0h6v4L3 7 0 4z" fill="#e8662a"/><path d="M1.500 1.500h3v1h-3z" fill="#f6d68a"/></svg>
        原图预览-工程<i></i>SP)-页码:1
        <svg class="x" width="7" height="7"><path d="M1 1l5 5M6 1L1 6" stroke="#aaa" stroke-width=".8"/></svg>
      </div>
      <div class="body"><sheet-drawing></sheet-drawing></div>
      <div class="foot">
        <svg width="12" height="18"><path d="M12 0v18L0 9z" fill="#6aa320"/></svg>
        <svg class="next" width="12" height="18"><path d="M0 0v18L12 9z" fill="#6aa320"/></svg>
        <button>黑色背景</button>
      </div>`;
  }
}

class WatermarkRibbon extends HTMLElement {
  connectedCallback() {
    this.attachShadow({ mode: "open" }).innerHTML = `
      <style>
        :host { position: absolute; inset: 0; pointer-events: none; }
        .tri { position: absolute; inset: 0; background: #29abf5; clip-path: polygon(600px 295px, 600px 453px, 442px 453px); }
        .txt { position: absolute; left: 529px; top: 381px; width: 72px; text-align: center; color: #fff; font: 700 17px/16px "Noto Sans CJK SC", sans-serif; letter-spacing: 1px; transform: rotate(-45deg); white-space: nowrap; }
        svg { position: absolute; left: 511px; top: 415px; }
      </style>
      <div class="tri"></div>
      <div class="txt">海绵软件</div>
      <svg width="28" height="26" viewBox="0 0 28 26">
        <g transform="rotate(-45 14 13)" fill="none" stroke="#fff" stroke-linecap="round">
          <path d="M3 7h9c3 0 4 2 4 5v3" stroke-width="2.600"/>
          <path d="M3 12h8" stroke-width="1.600"/>
          <path d="M3 16h8" stroke-width="1.600"/>
          <path d="M1 20h13c4 0 6-2 6-5" stroke-width="1.800"/>
          <path d="M20 4h6v12h-6z" fill="#fff" stroke-width="1"/>
        </g>
      </svg>`;
  }
}

customElements.define("cad-window", CadWindow);
customElements.define("title-bar", TitleBar);
customElements.define("menu-bar", MenuBar);
customElements.define("tool-row", ToolRow);
customElements.define("tool-group", ToolGroup);
customElements.define("tool-sep", ToolSep);
customElements.define("tool-combo", ToolCombo);
customElements.define("layer-state", LayerState);
customElements.define("side-group", SideGroup);
customElements.define("action-grid", ActionGrid);
customElements.define("action-button", ActionButton);
customElements.define("form-field", FormField);
customElements.define("side-panel", SidePanel);
customElements.define("v-strip", VStrip);
customElements.define("command-line", CommandLine);
customElements.define("work-area", WorkArea);
customElements.define("status-bar", StatusBar);
customElements.define("sheet-drawing", SheetDrawing);
customElements.define("preview-dialog", PreviewDialog);
customElements.define("watermark-ribbon", WatermarkRibbon);
</script>
</body>
</html>
